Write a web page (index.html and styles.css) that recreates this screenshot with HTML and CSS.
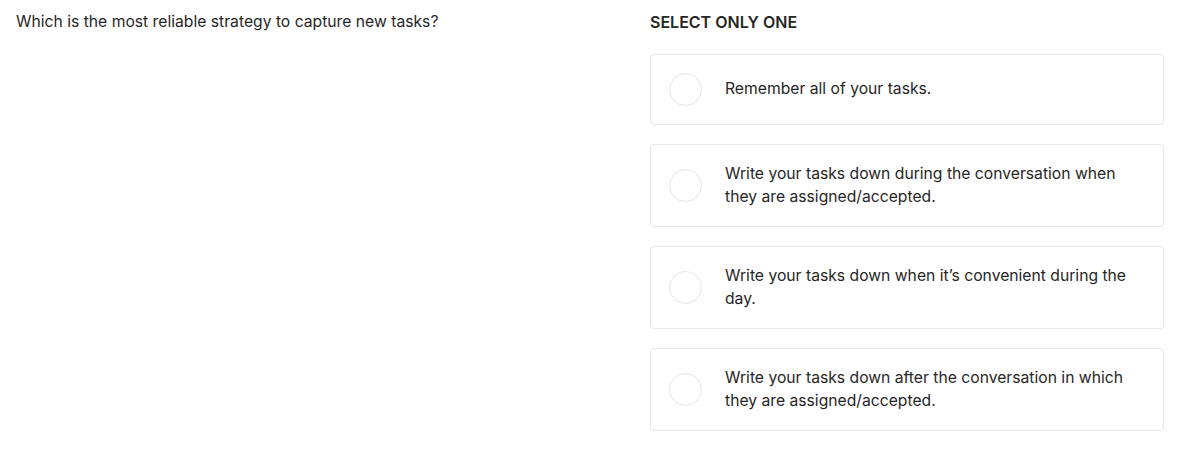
FILE: index.html
```html
<!DOCTYPE html>
<html>

<head>
    <title>Question</title>
    <link rel="stylesheet" href="styles.css">
</head>

<body>
    <div class="question-page">
        <div class="question-text">Which is the most reliable strategy to capture new tasks?</div>

        <div class="answers">
            <div class="answers-label">SELECT ONLY ONE</div>

            <ul class="option-list">
                <li class="option">
                    <span class="option-radio"></span>
                    <span class="option-text">Remember all of your tasks.</span>
                </li>
                <li class="option">
                    <span class="option-radio"></span>
                    <span class="option-text">Write your tasks down during the conversation when they are assigned/accepted.</span>
                </li>
                <li class="option">
                    <span class="option-radio"></span>
                    <span class="option-text">Write your tasks down when it’s convenient during the day.</span>
                </li>
                <li class="option">
                    <span class="option-radio"></span>
                    <span class="option-text">Write your tasks down after the conversation in which they are assigned/accepted.</span>
                </li>
            </ul>
        </div>
    </div>
</body>
</html>
```

FILE: styles.css
```css
body {
    margin: 0;
    background-color: #ffffff;
    color: #262626;
    font-family: Inter, "Liberation Sans", sans-serif;
}

.question-page {
    display: grid;
    grid-template-columns: 634px 514px;
    padding: 12px 0 0 16px;
}

.question-text {
    font-size: 15.7px;
    line-height: 20px;
}

.answers-label {
    font-size: 16px;
    font-weight: 600;
    line-height: 20px;
    margin-bottom: 22px;
}

.option-list {
    list-style: none;
    margin: 0;
    padding: 0;
}

.option {
    display: flex;
    align-items: center;
    gap: 23px;
    padding: 18px 30px 18px 18px;
    margin-bottom: 19px;
    border: 1px solid #e6e6e6;
    border-radius: 4px;
}

.option-radio {
    flex: none;
    width: 31px;
    height: 31px;
    border: 1.5px solid #e4e4e4;
    border-radius: 50%;
}

.option-text {
    font-size: 15.7px;
    line-height: 22.5px;
}
```
